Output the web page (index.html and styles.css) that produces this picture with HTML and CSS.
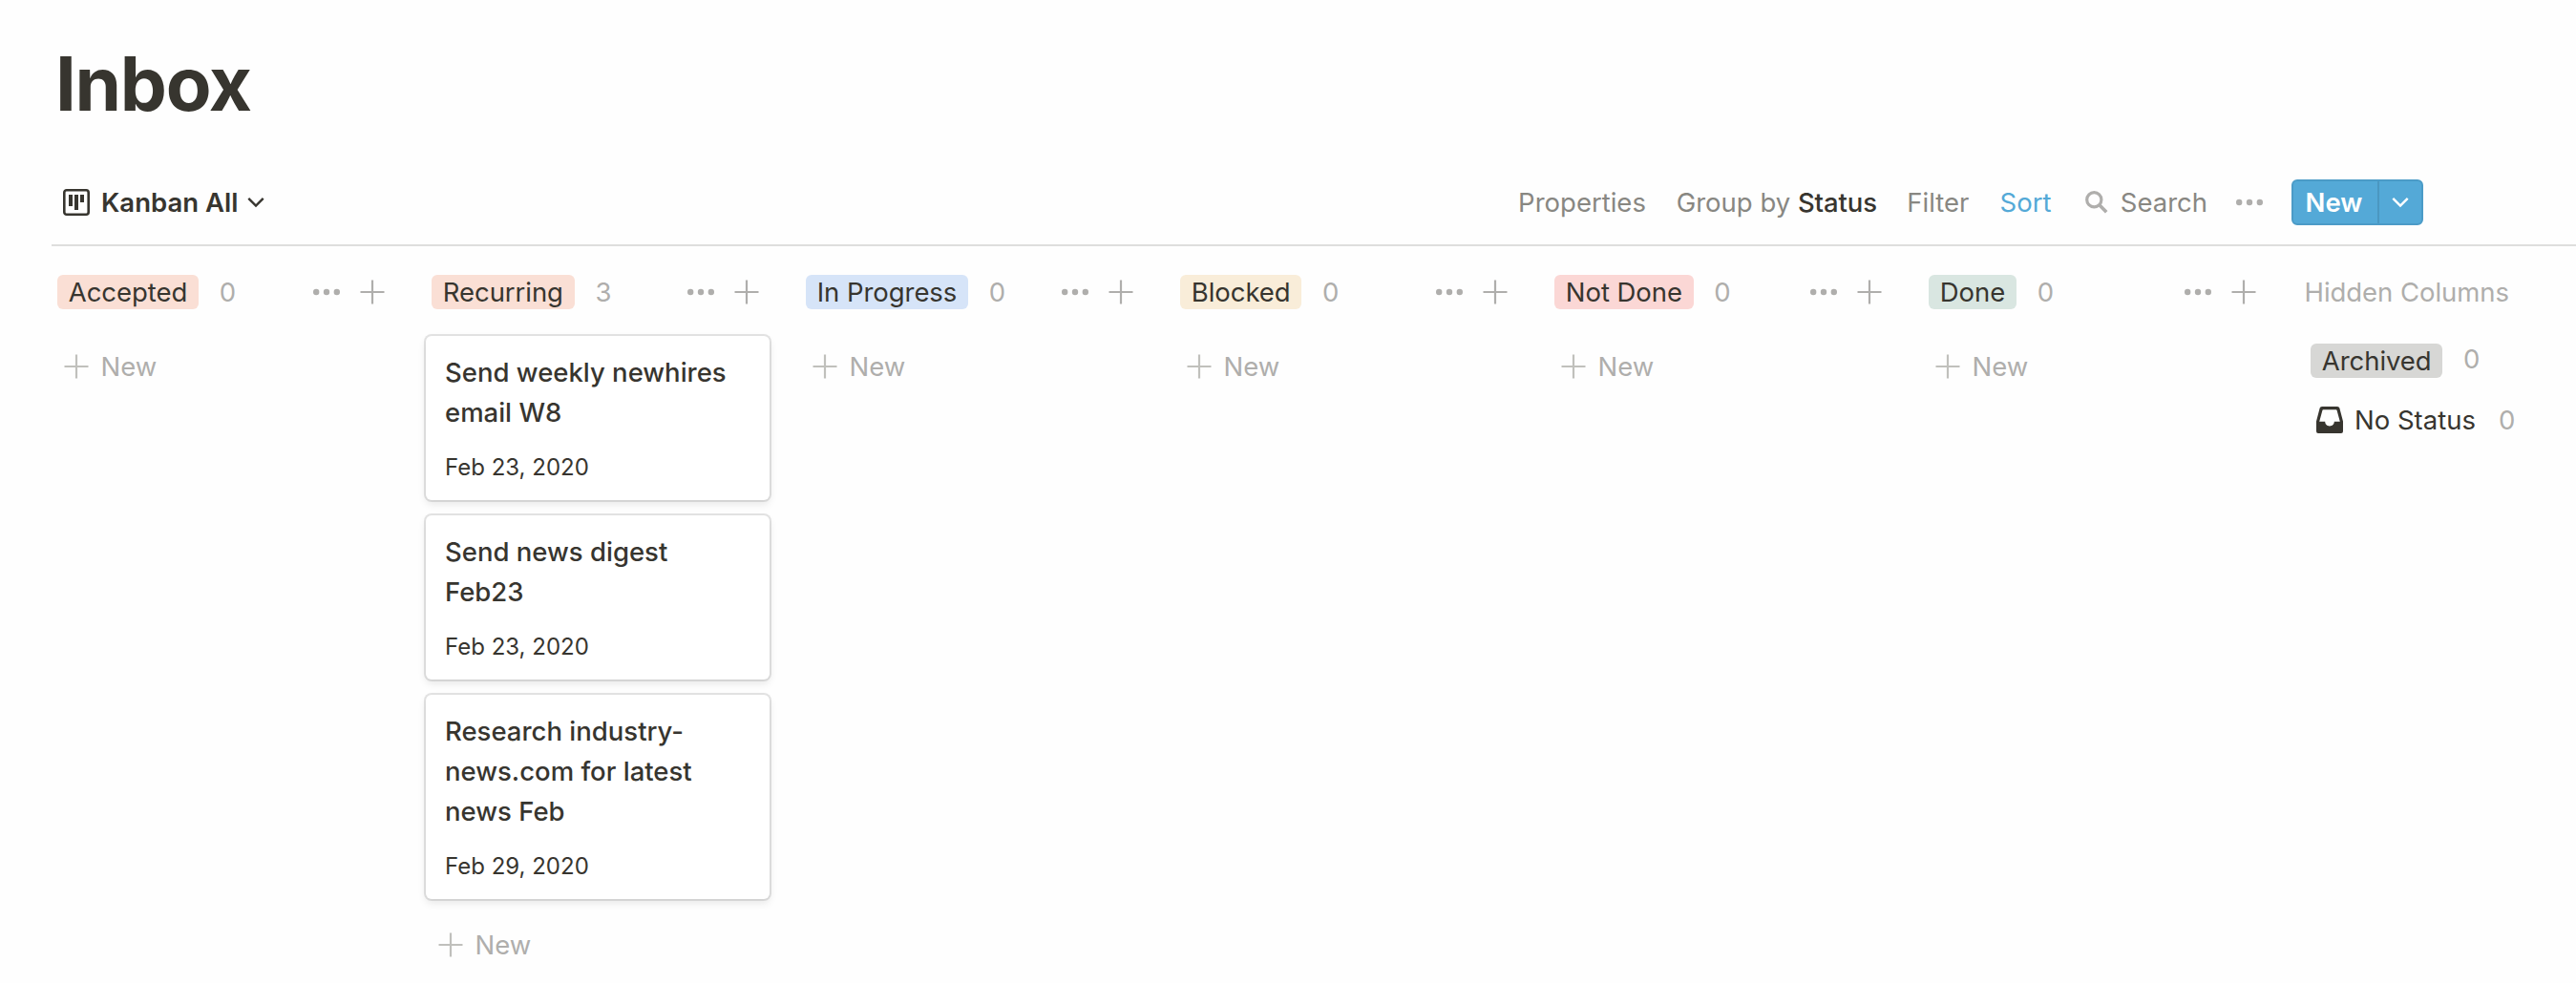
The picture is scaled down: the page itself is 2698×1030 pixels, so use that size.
FILE: index.html
```
<!DOCTYPE html>
<html lang="en">
<head>
<meta charset="utf-8">
<title>Inbox</title>
<link rel="stylesheet" href="styles.css">
</head>
<body>
<svg class="sprite" aria-hidden="true">
  <symbol id="plus" viewBox="0 0 26 26"><path d="M0.5 13h25M13 0.5v25" stroke="currentColor" stroke-width="2.2"/></symbol>
  <symbol id="dots" viewBox="0 0 28 8"><g fill="currentColor"><circle cx="3.2" cy="4" r="3.2"/><circle cx="14" cy="4" r="3.2"/><circle cx="24.8" cy="4" r="3.2"/></g></symbol>
  <symbol id="chevron" viewBox="0 0 18 12"><path d="M1.3 1.8 9 9.5l7.700-7.700" fill="none" stroke="currentColor" stroke-width="2.4"/></symbol>
</svg>

<h1 class="title">Inbox</h1>

<nav class="toolbar">
  <div class="view">
    <svg class="view-icon" viewBox="0 0 28 28"><rect x="1.300" y="1.300" width="25.400" height="25.400" rx="2.500" fill="none" stroke="currentColor" stroke-width="2.600"/><path d="M6 6h4v12H6zM12 6h4v16h-4zM18 6h4v8h-4z" fill="currentColor"/></svg>
    <span class="view-name">Kanban All</span>
    <svg class="chevron"><use href="#chevron"/></svg>
  </div>
  <div class="tools">
    <span>Properties</span>
    <span class="group">Group by <b class="strong">Status</b></span>
    <span>Filter</span>
    <span class="active">Sort</span>
    <span class="search">
      <svg class="search-icon" viewBox="0 0 24 24"><circle cx="9.300" cy="9.300" r="7.600" fill="none" stroke="currentColor" stroke-width="3.200"/><path d="M14.800 14.800 22.200 22.200" stroke="currentColor" stroke-width="3.600"/></svg>
      Search
    </span>
    <svg class="dots"><use href="#dots"/></svg>
    <div class="button">
      <span class="button-main">New</span>
      <span class="button-more"><svg class="chevron"><use href="#chevron"/></svg></span>
    </div>
  </div>
</nav>

<main class="board">
  <section class="column">
    <header class="head"><span class="tag orange">Accepted</span><span class="count">0</span><svg class="dots"><use href="#dots"/></svg><svg class="plus"><use href="#plus"/></svg></header>
    <div class="add"><svg class="plus"><use href="#plus"/></svg>New</div>
  </section>
  <section class="column">
    <header class="head"><span class="tag orange">Recurring</span><span class="count">3</span><svg class="dots"><use href="#dots"/></svg><svg class="plus"><use href="#plus"/></svg></header>
    <article class="card"><h2 class="card-title">Send weekly newhires email W8</h2><p class="date">Feb 23, 2020</p></article>
    <article class="card"><h2 class="card-title">Send news digest<br>Feb23</h2><p class="date">Feb 23, 2020</p></article>
    <article class="card"><h2 class="card-title">Research industry-<br>news.com for latest<br>news Feb</h2><p class="date">Feb 29, 2020</p></article>
    <div class="add"><svg class="plus"><use href="#plus"/></svg>New</div>
  </section>
  <section class="column">
    <header class="head"><span class="tag blue">In Progress</span><span class="count">0</span><svg class="dots"><use href="#dots"/></svg><svg class="plus"><use href="#plus"/></svg></header>
    <div class="add"><svg class="plus"><use href="#plus"/></svg>New</div>
  </section>
  <section class="column">
    <header class="head"><span class="tag yellow">Blocked</span><span class="count">0</span><svg class="dots"><use href="#dots"/></svg><svg class="plus"><use href="#plus"/></svg></header>
    <div class="add"><svg class="plus"><use href="#plus"/></svg>New</div>
  </section>
  <section class="column">
    <header class="head"><span class="tag red">Not Done</span><span class="count">0</span><svg class="dots"><use href="#dots"/></svg><svg class="plus"><use href="#plus"/></svg></header>
    <div class="add"><svg class="plus"><use href="#plus"/></svg>New</div>
  </section>
  <section class="column">
    <header class="head"><span class="tag green">Done</span><span class="count">0</span><svg class="dots"><use href="#dots"/></svg><svg class="plus"><use href="#plus"/></svg></header>
    <div class="add"><svg class="plus"><use href="#plus"/></svg>New</div>
  </section>
  <aside class="hidden-columns">
    <div class="hidden-title">Hidden Columns</div>
    <div class="archived"><span class="tag gray">Archived</span><span class="count">0</span></div>
    <div class="no-status">
      <svg class="tray" viewBox="0 0 28 28"><path fill="currentColor" fill-rule="evenodd" d="M6 0h16c1.200 0 2 .7 2.400 1.800L28 15.500V26a2 2 0 0 1-2 2H2a2 2 0 0 1-2-2V15.500L3.600 1.800C4 .7 4.800 0 6 0ZM7.300 3.200c-.5 0-.8.3-.9.800L3.200 15.700h6c0 2.600 2 4.700 4.800 4.700s4.800-2.100 4.800-4.700h6L21.600 4c-.1-.5-.4-.8-.9-.8Z"/></svg>
      <span>No Status</span><span class="count">0</span>
    </div>
  </aside>
</main>
</body>
</html>
```
FILE: styles.css
```
* { box-sizing: border-box; }

body {
  margin: 0;
  padding: 40px 0 0 54px;
  height: 1030px;
  overflow: hidden;
  background: #fefefe;
  color: #37352f;
  font: 400 27.5px/36px Inter, "Liberation Sans", sans-serif;
  white-space: nowrap;
}

svg { display: block; flex: none; }
.sprite { display: none; }

.title {
  margin: 0 0 32px;
  padding-left: 4px;
  font-size: 78px;
  font-weight: 700;
  line-height: 96px;
  letter-spacing: -1.3px;
}

.toolbar {
  display: flex;
  align-items: center;
  justify-content: space-between;
  height: 90px;
  padding: 0 160px 0 12px;
  border-bottom: 2px solid #dededd;
}

.view { display: flex; align-items: center; }
.view-icon { width: 28px; height: 28px; margin-right: 12px; }
.view-name { font-weight: 600; margin-right: 10px; }
.chevron { width: 18px; height: 12px; }

.tools { display: flex; align-items: center; gap: 32.3px; color: #888782; }
.group { margin: 0 -1px 0 -.5px; }
.strong { font-weight: 500; color: #37352f; letter-spacing: -.1px; }
.active { color: #54a9d7; }
.search { display: flex; align-items: center; gap: 13px; margin-left: 3px; }
.search-icon { width: 24px; height: 24px; color: #afaeac; }

.dots { width: 28px; height: 8px; color: #afaeac; }
.plus { width: 26px; height: 26px; color: #afaeac; }

.tools .dots { margin: 0 -2px 0 -2.7px; }

.button {
  display: flex;
  width: 138px;
  height: 48px;
  border: 2px solid #4b9bc7;
  border-radius: 6px;
  background: #54a9d7;
  color: #fff;
  line-height: 44px;
}
.button-main {
  width: 90px;
  padding-left: 12.5px;
  border-right: 2px solid #4b97c1;
  font-weight: 600;
}
.button-more { display: flex; flex: 1; align-items: center; justify-content: center; }

.board { display: flex; align-items: flex-start; gap: 32px; padding-top: 30px; }
.column { display: flex; flex: none; flex-direction: column; gap: 16px; width: 360px; }

.head {
  display: flex;
  align-items: center;
  height: 36px;
  margin-bottom: 12px;
  padding: 0 11px 0 6px;
}
.head .dots { margin: 0 21px 0 auto; }

.tag { padding: 0 11.8px; border-radius: 6px; line-height: 36px; letter-spacing: -.06px; }
.orange { background: #fadfd5; }
.blue { background: #d6e4f8; }
.yellow { background: #f9edd9; }
.red { background: #fbd7d5; }
.green { background: #d9e6e1; }
.gray { background: #d7d7d5; }

.count { margin-left: 21.7px; color: #afaeac; }

.card {
  padding: 17px 20px 16px;
  border-radius: 6px;
  background: #fff;
  box-shadow: 0 0 0 2px rgba(15, 15, 15, .11), 0 4px 8px rgba(15, 15, 15, .1);
}
.card-title {
  margin: 0;
  font-size: 27.5px;
  font-weight: 500;
  line-height: 42px;
  white-space: normal;
}
.date { margin: 19px 0 0; font-size: 24px; }

.add {
  display: flex;
  align-items: center;
  gap: 12.5px;
  height: 64px;
  padding-left: 13px;
  color: #afaeac;
}
.add .plus { color: #c0c0bc; }

.hidden-columns { flex: none; }
.hidden-title { padding-left: 7.5px; color: #afaeac; letter-spacing: -.05px; }
.archived { display: flex; align-items: center; margin-top: 36px; padding-left: 14px; }
.archived .count { margin-top: -4px; }
.no-status { display: flex; align-items: center; margin-top: 26px; padding-left: 20px; }
.no-status .count { margin-left: 24px; }
.tray { width: 28px; height: 28px; margin-right: 12px; }
```
